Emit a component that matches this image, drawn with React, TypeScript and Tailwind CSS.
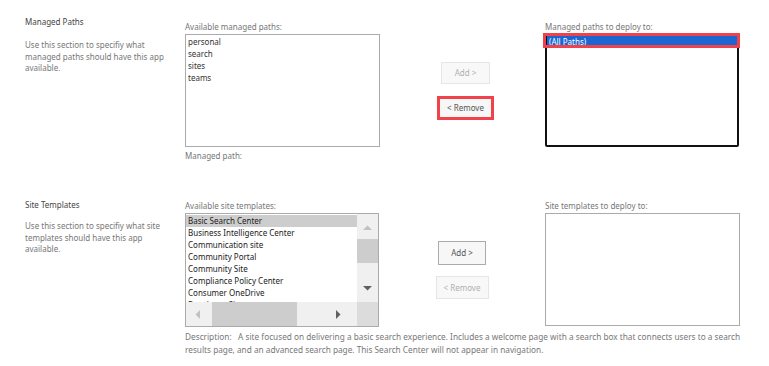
import React from "react";

const font = { fontFamily: '"Noto Sans", "Open Sans", sans-serif' };

function ListBox({
  items,
  selected,
  focused,
}: {
  items: string[];
  selected?: number;
  focused?: boolean;
}) {
  return (
    <div
      className={
        focused
          ? "h-[113px] w-[194px] rounded-[2px] border-2 border-[#111] bg-white"
          : "h-[113px] w-[195px] border border-[#ababab] bg-white pt-[1px]"
      }
    >
      {items.map((item, i) => (
        <div
          key={item}
          className={
            i === selected
              ? "h-[12px] px-[2px] text-[8px] leading-[12px] text-white bg-[#1a66d2]"
              : "h-[12px] px-[2px] text-[8px] leading-[12px] text-[#333]"
          }
        >
          {item}
        </div>
      ))}
    </div>
  );
}

function TemplateList() {
  const items = [
    "Basic Search Center",
    "Business Intelligence Center",
    "Communication site",
    "Community Portal",
    "Community Site",
    "Compliance Policy Center",
    "Consumer OneDrive",
    "Developer Site",
  ];
  return (
    <div className="flex h-[114px] w-[194px] flex-col overflow-hidden border border-[#ababab] bg-white">
      <div className="flex h-[88px]">
        <div className="flex-1 overflow-hidden pt-[1px]">
          {items.map((item, i) => (
            <div
              key={item}
              className={
                i === 0
                  ? "h-[12px] px-[2px] text-[8px] leading-[12px] text-[#222] bg-[#cdcdcd]"
                  : "h-[12px] px-[2px] text-[8px] leading-[12px] text-[#222]"
              }
            >
              {item}
            </div>
          ))}
        </div>
        <div className="flex w-[21px] flex-col items-center bg-[#f0f0f0]">
          <svg width="9" height="5" viewBox="0 0 9 5" className="mt-[11px]">
            <path d="M0 5 L4.5 0.5 L9 5 Z" fill="#c2c2c2" />
          </svg>
          <div className="mt-[9px] h-[24px] w-[21px] bg-[#cdcdcd]" />
          <svg width="9" height="5" viewBox="0 0 9 5" className="mt-[23px]">
            <path d="M0 0 L4.5 4.5 L9 0 Z" fill="#606060" />
          </svg>
        </div>
      </div>
      <div className="flex h-[24px]">
        <div className="flex flex-1 items-center bg-[#f0f0f0]">
          <svg width="5" height="9" viewBox="0 0 5 9" className="ml-[9px]">
            <path d="M5 0 L0.5 4.5 L5 9 Z" fill="#c2c2c2" />
          </svg>
          <div className="ml-[12px] h-[24px] w-[85px] bg-[#cdcdcd]" />
          <svg width="5" height="9" viewBox="0 0 5 9" className="ml-[39px]">
            <path d="M0 0 L4.5 4.5 L0 9 Z" fill="#606060" />
          </svg>
        </div>
        <div className="w-[21px] bg-[#dcdcdc]" />
      </div>
    </div>
  );
}

function Btn({
  label,
  disabled,
  width,
  height,
}: {
  label: string;
  disabled?: boolean;
  width: string;
  height: string;
}) {
  return (
    <div
      className={
        disabled
          ? `${width} ${height} flex items-center justify-center border border-[#e6e6e6] bg-[#f8f8f8] text-[8px] text-[#b0b0b0]`
          : `${width} ${height} flex items-center justify-center border border-[#ababab] bg-[#f7f7f7] text-[8px] text-[#555]`
      }
    >
      {label}
    </div>
  );
}

export default function App() {
  return (
    <div className="h-[366px] w-[769px] overflow-hidden bg-white" style={font}>
      {/* Managed paths */}
      <div className="flex h-[199px] pt-[16px]">
        <div className="w-[185px] pl-[25px] pr-[15px]">
          <div className="h-[12px] text-[8px] leading-[12px] text-[#444]">Managed Paths</div>
          <p className="mt-[11px] text-[8px] leading-[11.5px] text-[#777]">
            Use this section to specifiy what managed paths should have this app available.
          </p>
        </div>
        <div className="w-[194px] pt-[5px]">
          <div className="mb-[1px] h-[12px] text-[8px] leading-[12px] text-[#777]">
            Available managed paths:
          </div>
          <ListBox items={["personal", "search", "sites", "teams"]} />
          <div className="mt-[3px] text-[8px] leading-[12px] text-[#777]">Managed path:</div>
        </div>
        <div className="flex w-[166px] flex-col items-center pt-[46px] pl-[7px]">
          <Btn label="Add >" disabled width="w-[49px]" height="h-[22px]" />
          <div className="mt-[12px] flex h-[24px] w-[57px] items-center justify-center border-[3px] border-[#f0424b]">
            <div className="flex h-[18px] w-[51px] items-center justify-center bg-[#f7f7f7] text-[8px] text-[#555]">
              &lt; Remove
            </div>
          </div>
        </div>
        <div className="w-[195px] pt-[5px]">
          <div className="mb-[1px] h-[12px] text-[8px] leading-[12px] text-[#777]">
            Managed paths to deploy to:
          </div>
          <div className="relative">
            <ListBox items={["(All Paths)"]} selected={0} focused />
            <div className="absolute left-[-2px] top-[-1px] h-[15px] w-[197px] border-[3px] border-[#f0424b]" />
          </div>
        </div>
      </div>

      {/* Site templates */}
      <div className="flex">
        <div className="w-[185px] pl-[25px] pr-[15px]">
          <div className="h-[12px] text-[8px] leading-[12px] text-[#444]">Site Templates</div>
          <p className="mt-[9px] text-[8px] leading-[11.5px] text-[#777]">
            Use this section to specifiy what site templates should have this app available.
          </p>
        </div>
        <div className="w-[560px] pt-[1px]">
          <div className="flex">
            <div className="w-[194px]">
              <div className="mb-[1px] h-[12px] text-[8px] leading-[12px] text-[#777]">
                Available site templates:
              </div>
              <TemplateList />
            </div>
            <div className="flex w-[166px] flex-col items-center pt-[41px]">
              <Btn label="Add >" width="w-[48px]" height="h-[24px]" />
              <div className="mt-[11px]">
                <Btn label="< Remove" disabled width="w-[53px]" height="h-[23px]" />
              </div>
            </div>
            <div className="w-[195px]">
              <div className="mb-[1px] h-[12px] text-[8px] leading-[12px] text-[#777]">
                Site templates to deploy to:
              </div>
              <div className="h-[113px] w-[195px] border border-[#ababab] bg-white" />
            </div>
          </div>
          <p className="mt-[3px] w-[560px] text-[8.25px] leading-[13px] text-[#777]">
            Description:&nbsp;&nbsp; A site focused on delivering a basic search experience. Includes a
            welcome page with a search box that connects users to a search results page, and an
            advanced search page. This Search Center will not appear in navigation.
          </p>
        </div>
      </div>
    </div>
  );
}
